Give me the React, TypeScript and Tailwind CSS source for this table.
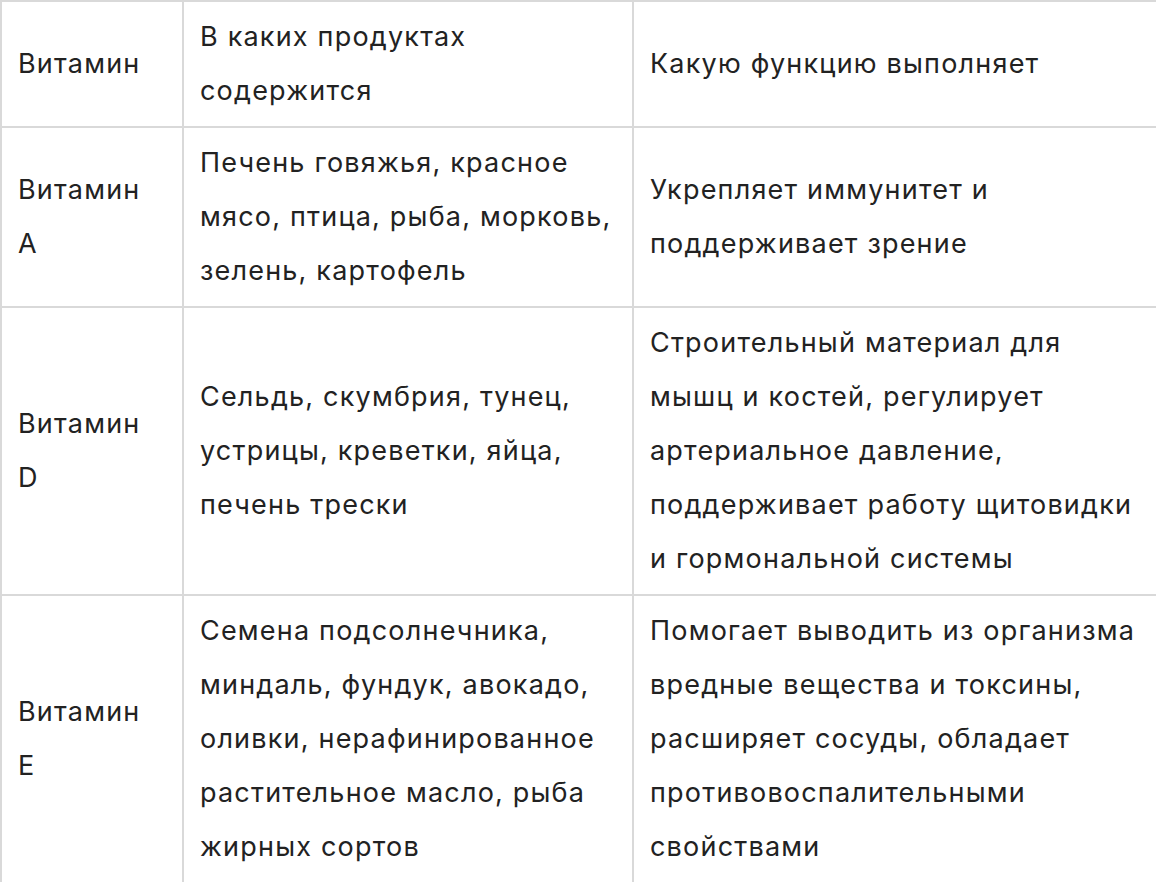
import React from "react";

const rows: string[][][] = [
  [["Витамин"], ["В каких продуктах", "содержится"], ["Какую функцию выполняет"]],
  [
    ["Витамин", "A"],
    ["Печень говяжья, красное", "мясо, птица, рыба, морковь,", "зелень, картофель"],
    ["Укрепляет иммунитет и", "поддерживает зрение"],
  ],
  [
    ["Витамин", "D"],
    ["Сельдь, скумбрия, тунец,", "устрицы, креветки, яйца,", "печень трески"],
    [
      "Строительный материал для",
      "мышц и костей, регулирует",
      "артериальное давление,",
      "поддерживает работу щитовидки",
      "и гормональной системы",
    ],
  ],
  [
    ["Витамин", "E"],
    [
      "Семена подсолнечника,",
      "миндаль, фундук, авокадо,",
      "оливки, нерафинированное",
      "растительное масло, рыба",
      "жирных сортов",
    ],
    [
      "Помогает выводить из организма",
      "вредные вещества и токсины,",
      "расширяет сосуды, обладает",
      "противовоспалительными",
      "свойствами",
    ],
  ],
];

export default function App() {
  return (
    <div className="w-[1156px] h-[882px] bg-white overflow-hidden">
      <table
        className="w-[1156px] table-fixed border-collapse text-[27px] leading-[54px] tracking-[1.2px] text-[#222222]"
        style={{ fontFamily: "Inter, 'Noto Sans', sans-serif" }}
      >
        <colgroup>
          <col className="w-[182px]" />
          <col className="w-[450px]" />
          <col className="w-[524px]" />
        </colgroup>
        <tbody>
          {rows.map((row, i) => (
            <tr key={i}>
              {row.map((cell, j) => (
                <td
                  key={j}
                  className="border-2 border-[#d9d9d9] px-4 py-2 align-middle whitespace-nowrap"
                >
                  {cell.map((line, k) => (
                    <div key={k}>{line}</div>
                  ))}
                </td>
              ))}
            </tr>
          ))}
        </tbody>
      </table>
    </div>
  );
}
